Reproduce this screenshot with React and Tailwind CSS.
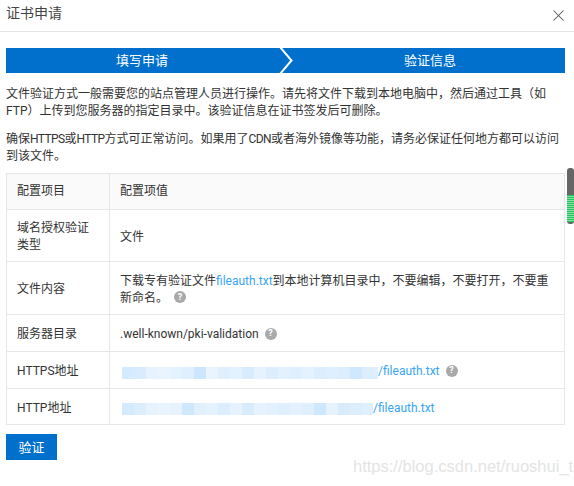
import React from 'react';
import { X } from 'lucide-react';

const fontStack = 'font-["Roboto","Noto_Sans_CJK_SC",sans-serif]';

const httpsBlocks = ['bg-[#d4eafe]', 'bg-[#d9ecfe]', 'bg-[#e6f2fe]', 'bg-[#e9f4fe]', 'bg-[#e4f1fe]', 'bg-[#e0effe]', 'bg-[#cbe6fe]', 'bg-[#e9f4fe]', 'bg-[#dfeffe]', 'bg-[#e4f1fe]', 'bg-[#d9ecfe]', 'bg-[#e6f2fe]', 'bg-[#dcedfe]', 'bg-[#e3f0fe]', 'bg-[#e0effe]', 'bg-[#e4f1fe]', 'bg-[#dcedfe]', 'bg-[#e0effe]', 'bg-[#dcedfe]', 'bg-[#cfe8fe]', 'bg-[#dcedfe]', 'bg-[#e0effe]'];
const httpBlocks = ['bg-[#d4eafe]', 'bg-[#dcedfe]', 'bg-[#e6f2fe]', 'bg-[#e9f4fe]', 'bg-[#e6f2fe]', 'bg-[#d0e8fe]', 'bg-[#e2f0fe]', 'bg-[#e4f1fe]', 'bg-[#dcedfe]', 'bg-[#e6f2fe]', 'bg-[#d9ecfe]', 'bg-[#e6f2fe]', 'bg-[#e3f0fe]', 'bg-[#e0effe]', 'bg-[#e4f1fe]', 'bg-[#e0effe]', 'bg-[#d0e8fe]', 'bg-[#e6f2fe]', 'bg-[#d9ecfe]', 'bg-[#dcedfe]', 'bg-[#e0effe]'];

const Help = () => (
  <span className="relative top-[-1px] ml-[6px] inline-flex h-[12px] w-[12px] items-center justify-center rounded-full bg-[#a9a9a9] align-middle text-[9px] leading-none font-bold text-white">?</span>
);

const Mosaic = ({ blocks, width }) => (
  <span className={`relative top-[1px] ml-[2px] inline-flex h-[12px] overflow-hidden align-middle ${width}`}>
    {blocks.map((color, i) => (
      <span key={i} className={`h-[12px] w-[12px] shrink-0 ${color}`} />
    ))}
  </span>
);

const Link = ({ children }) => <span className="text-[#38a6f5]">{children}</span>;
const Narrow = ({ children }) => <span className="tracking-[-0.6px]">{children}</span>;

const rows = [
  { label: <>域名授权验证<br />类型</>, value: '文件', height: 'h-[52px]' },
  {
    label: '文件内容',
    value: <>下载专有验证文件<Link>fileauth.txt</Link>到本地计算机目录中，不要编辑，不要打开，不要重新命名。<Help /></>,
    height: 'h-[53px]',
  },
  { label: '服务器目录', value: <>.well-known/pki-validation<Help /></>, height: 'h-[37px]' },
  {
    label: 'HTTPS地址',
    value: <><Mosaic blocks={httpsBlocks} width="w-[256px]" /><Link>/fileauth.txt</Link><Help /></>,
    height: 'h-[37px]',
  },
  {
    label: 'HTTP地址',
    value: <><Mosaic blocks={httpBlocks} width="w-[251px]" /><Link>/fileauth.txt</Link></>,
    height: 'h-[36px]',
  },
];

export default function App() {
  return (
    <div className={`relative h-[486px] w-[574px] overflow-hidden bg-white text-[12px] leading-[17px] text-[#333] ${fontStack}`}>
      {/* Header */}
      <div className="flex h-[32px] items-start justify-between border-b border-[#e3e3e3] pr-[6px] pl-[6px]">
        <h1 className="mt-[3px] text-[14px] leading-[20px] font-normal text-[#444]">证书申请</h1>
        <X className="mt-[6px] h-[19px] w-[19px] text-[#555]" strokeWidth={1.3} />
      </div>

      <div className="px-[6px] pr-[9px] pt-[16px]">
        {/* Steps */}
        <div className="relative flex h-[25px] bg-[#0070cc] text-[13px] text-white">
          <div className="flex w-[272px] items-center justify-center">填写申请</div>
          <div className="flex flex-1 items-center justify-center pl-[17px]">验证信息</div>
          <svg className="absolute top-0 left-[272px] h-[25px] w-[22px]" viewBox="0 0 22 25" fill="none">
            <path d="M2 -1 L13.5 12.5 L2 26" stroke="#fff" strokeWidth="2" />
          </svg>
        </div>

        {/* Intro */}
        <p className="mt-[13px]">文件验证方式一般需要您的站点管理人员进行操作。请先将文件下载到本地电脑中，然后通过工具（如FTP）上传到您服务器的指定目录中。该验证信息在证书签发后可删除。</p>
        <p className="mt-[11px]">确保<Narrow>HTTPS</Narrow>或<Narrow>HTTP</Narrow>方式可正常访问。如果用了<Narrow>CDN</Narrow>或者海外镜像等功能，请务必保证任何地方都可以访问到该文件。</p>

        {/* Config table */}
        <table className="mt-[8px] w-full table-fixed border-collapse border border-[#e6e6e6]">
          <thead>
            <tr className="h-[36px] bg-[#fafafa]">
              <th className="w-[103px] border border-[#e6e6e6] px-[10px] text-left font-normal">配置项目</th>
              <th className="border border-[#e6e6e6] px-[10px] text-left font-normal">配置项值</th>
            </tr>
          </thead>
          <tbody>
            {rows.map((row, i) => (
              <tr key={i} className={row.height}>
                <td className="border border-[#e6e6e6] px-[10px] pt-[3px]">{row.label}</td>
                <td className="border border-[#e6e6e6] px-[10px] pt-[3px]">{row.value}</td>
              </tr>
            ))}
          </tbody>
        </table>

        <button className="mt-[9px] h-[26px] w-[51px] bg-[#0070cc] text-[13px] text-white">验证</button>
      </div>

      {/* Scrollbar */}
      <div className="absolute top-[168px] right-0 h-[56px] w-[7px] overflow-hidden rounded-[3px] bg-[#666]">
        <div className="mt-[27px] h-[27px] bg-[repeating-linear-gradient(#22c55e_0,#22c55e_1px,#86e0a5_1px,#86e0a5_2px)]" />
      </div>

      {/* Watermark */}
      <div className='absolute top-[456px] left-[353px] font-["Liberation_Sans",sans-serif] text-[16.5px] leading-[20px] whitespace-nowrap text-[#e4e4e4]'>https://blog.csdn.net/ruoshui_t</div>
    </div>
  );
}
